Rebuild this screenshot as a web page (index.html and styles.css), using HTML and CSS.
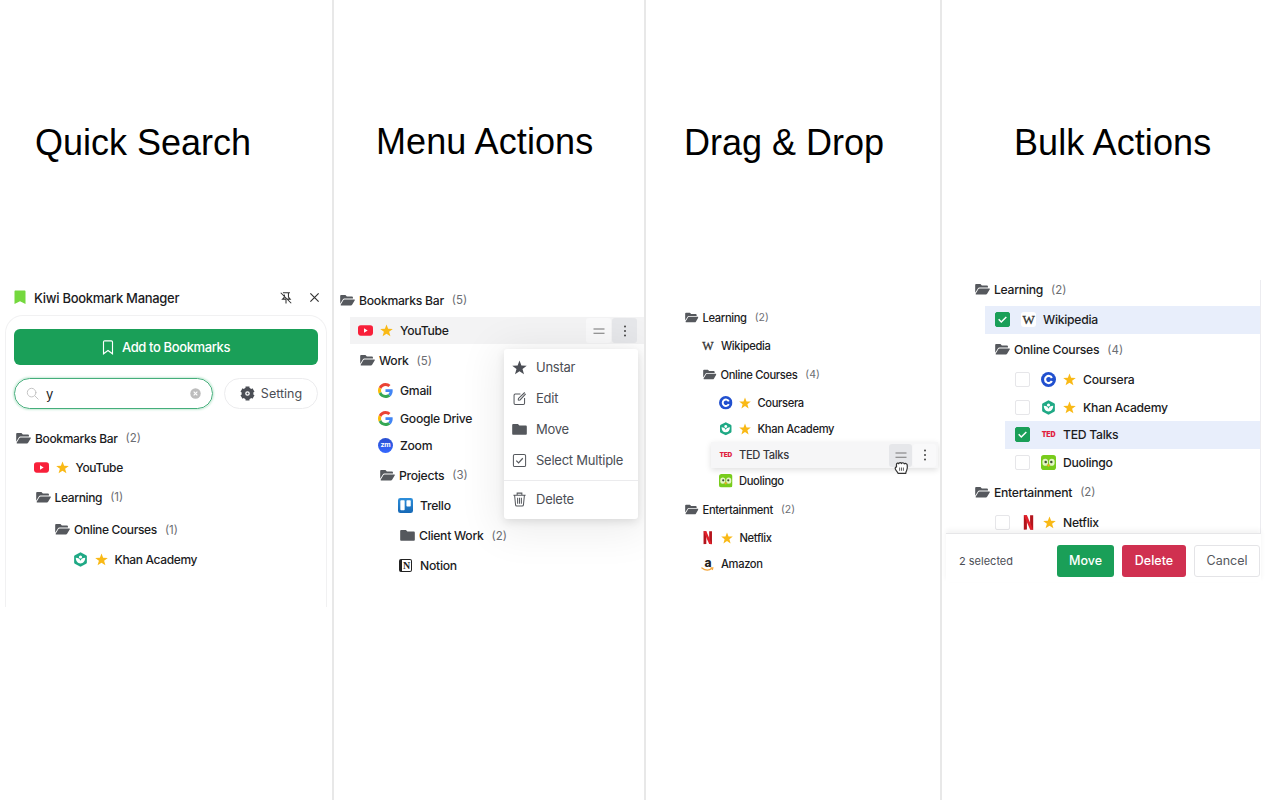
FILE: index.html
```html
<!DOCTYPE html>
<html lang="en">
<head>
    <meta charset="UTF-8">
    <meta name="viewport" content="width=device-width, initial-scale=1.0">
    <title>Kiwi Bookmark Manager</title>
    <link rel="stylesheet" href="styles.css">
</head>
<body>
    <!-- Icon sprite -->
    <svg class="sprite" aria-hidden="true">
        <defs>
            <linearGradient id="grad-trello" x1="0" y1="0" x2="0" y2="1">
                <stop offset="0" stop-color="#2d8fdb"/>
                <stop offset="1" stop-color="#1668b5"/>
            </linearGradient>
        </defs>
        <symbol id="folder-open" viewBox="0 0 16 14">
            <path fill="#55585d" d="M1.2 1h4.6l1.5 1.6h5.500c.6 0 1 .4 1 1v1.200H4.600c-.6 0-1.100.3-1.400.8L.2 10.400V2c0-.6.4-1 1-1z"/>
            <path fill="#55585d" d="M4.800 5.800h10.600c.4 0 .6.4.4.8l-2.900 5c-.3.5-.7.7-1.200.7H1.100c-.4 0-.6-.4-.4-.8l3-5c.2-.5.6-.7 1.100-.7z"/>
        </symbol>
        <symbol id="folder" viewBox="0 0 16 14">
            <path fill="#55585d" d="M1.400 1h4.400c.3 0 .6.1.8.3l1.300 1.300h6.700c.7 0 1.200.5 1.200 1.200v7.700c0 .7-.5 1.200-1.200 1.200H1.400c-.7 0-1.200-.5-1.200-1.200V2.200C.2 1.500.7 1 1.400 1z"/>
        </symbol>
        <symbol id="star" viewBox="0 0 24 24">
            <path d="M12 .8l3 8.100 8.600.3-6.800 5.300 2.400 8.300L12 18l-7.200 4.800 2.400-8.300L.4 9.200 9 8.900z"/>
        </symbol>
        <symbol id="youtube" viewBox="0 0 16 16">
            <rect x="0" y="2.500" width="16" height="11" rx="3" fill="#f8203a"/>
            <path fill="#fff" d="M6.400 5.700v4.600L10.300 8z"/>
        </symbol>
        <symbol id="khan" viewBox="0 0 16 16">
            <path fill="#1fa985" d="M8 .2l6 3.200c.5.300.8.700.8 1.300v6.600c0 .6-.3 1-.8 1.300L8 15.800l-6-3.200c-.5-.3-.8-.7-.8-1.300V4.700c0-.6.3-1 .8-1.300z"/>
            <circle cx="8" cy="5.300" r="1.700" fill="#fff"/>
            <path fill="#fff" d="M3 6.200c2.600 0 4.400 1.300 5 3.200.6-1.900 2.400-3.200 5-3.200 0 3.600-2 6-5 6s-5-2.400-5-6z"/>
        </symbol>
        <symbol id="google" viewBox="0 0 48 48">
            <path fill="#ea4335" d="M24 9.500c3.540 0 6.710 1.220 9.210 3.600l6.850-6.850C35.900 2.380 30.470 0 24 0 14.620 0 6.510 5.380 2.560 13.220l7.980 6.190C12.430 13.720 17.740 9.500 24 9.500z"/>
            <path fill="#4285f4" d="M46.980 24.550c0-1.570-.15-3.090-.38-4.550H24v9.020h12.940c-.58 2.960-2.260 5.480-4.780 7.180l7.730 6c4.510-4.180 7.090-10.360 7.090-17.650z"/>
            <path fill="#fbbc05" d="M10.530 28.590c-.48-1.450-.76-2.990-.76-4.590s.27-3.140.76-4.590l-7.980-6.190C.92 16.460 0 20.120 0 24c0 3.880.92 7.540 2.560 10.780l7.970-6.190z"/>
            <path fill="#34a853" d="M24 48c6.480 0 11.930-2.130 15.890-5.810l-7.730-6c-2.150 1.450-4.920 2.300-8.160 2.300-6.260 0-11.570-4.220-13.470-9.910l-7.980 6.190C6.510 42.620 14.620 48 24 48z"/>
        </symbol>
        <symbol id="trello" viewBox="0 0 16 16">
            <rect width="16" height="16" rx="2.500" fill="url(#grad-trello)"/>
            <rect x="2.500" y="2.500" width="4.600" height="10.500" rx=".8" fill="#fff"/>
            <rect x="9" y="2.500" width="4.600" height="6.500" rx=".8" fill="#fff"/>
        </symbol>
        <symbol id="coursera" viewBox="0 0 16 16">
            <circle cx="8" cy="8" r="8" fill="#2150cf"/>
            <path fill="none" stroke="#fff" stroke-width="2.300" d="M11.600 9.700a3.800 3.800 0 1 1 0-3.400"/>
        </symbol>
        <symbol id="duolingo" viewBox="0 0 16 16">
            <rect width="16" height="16" rx="3" fill="#78cc1c"/>
            <rect x="1.500" y="4" width="6" height="7.500" rx="3" fill="#e3f5c4"/>
            <rect x="8.500" y="4" width="6" height="7.500" rx="3" fill="#e3f5c4"/>
            <circle cx="5" cy="7.500" r="1.300" fill="#3f5232"/>
            <circle cx="11" cy="7.500" r="1.300" fill="#3f5232"/>
            <path fill="#f5a623" d="M6 10h4l-2 2.800z"/>
        </symbol>
        <symbol id="netflix" viewBox="0 0 16 16">
            <path fill="#b4141c" d="M3 .3h3.300v15.200l-3.300.3zM9.700.3H13v15.500l-3.300-.3z"/>
            <path fill="#e3202b" d="M3 .3h3.300l6.700 15.500-3.300-.3z"/>
        </symbol>
        <symbol id="smile" viewBox="0 0 14 4">
            <path fill="none" stroke="#f3a63b" stroke-width="1.400" stroke-linecap="round" d="M1 .8c3.500 2.900 7.800 2.900 11 .5M10.800.8h1.900l-.4 1.700"/>
        </symbol>
        <symbol id="bookmark" viewBox="0 0 12 16">
            <path d="M1.200 2.200c0-.8.500-1.300 1.300-1.300h7c.8 0 1.300.5 1.300 1.300v12.500L6 11.200l-4.800 3.500z"/>
        </symbol>
        <symbol id="brand" viewBox="0 0 12 15">
            <path fill="#74d83e" d="M.5 1.500C.5.900.9.500 1.500.500h9c.6 0 1 .4 1 1V14L6 11.300.5 14z"/>
        </symbol>
        <symbol id="unpin" viewBox="0 0 16 16">
            <path fill="none" stroke="#333" stroke-width="1.200" d="M4.500 2h8M10.800 2v5l2 2.300H9.600M8 9.300v5M6 4v3.200L4 9.300h4M2 2l12 12"/>
        </symbol>
        <symbol id="close" viewBox="0 0 12 12">
            <path fill="none" stroke="#333" stroke-width="1.300" d="M1.500 1.500l9 9M10.500 1.500l-9 9"/>
        </symbol>
        <symbol id="search" viewBox="0 0 16 16">
            <path fill="none" stroke="#c2c2c2" stroke-width="1.200" stroke-linecap="round" d="M11 11l4 4M12.200 6.900a5.300 5.300 0 1 1-10.600 0 5.300 5.300 0 0 1 10.600 0z"/>
        </symbol>
        <symbol id="clear" viewBox="0 0 12 12">
            <circle cx="6" cy="6" r="5.700" fill="#bdbdbd"/>
            <path stroke="#fff" stroke-width="1.200" d="M4 4l4 4M8 4l-4 4"/>
        </symbol>
        <symbol id="gear" viewBox="0 0 16 16">
            <circle cx="8" cy="8" r="4.400" fill="none" stroke="#4b4e55" stroke-width="3.800"/>
            <path stroke="#4b4e55" stroke-width="4.200" d="M8 .6v2.600M8 12.800v2.600M1.600 4.300l2.200 1.300M12.200 10.400l2.200 1.300M1.600 11.700l2.200-1.300M12.200 5.600l2.200-1.300"/>
            <circle cx="8" cy="8" r="1.100" fill="#4b4e55"/>
        </symbol>
        <symbol id="handle" viewBox="0 0 12 12">
            <path stroke="#777" stroke-width="1.100" d="M.5 4h11M.5 8.300h11"/>
        </symbol>
        <symbol id="kebab" viewBox="0 0 12 12">
            <g fill="#444"><circle cx="6" cy="1.400" r="1"/><circle cx="6" cy="6" r="1"/><circle cx="6" cy="10.600" r="1"/></g>
        </symbol>
        <symbol id="edit" viewBox="0 0 16 16">
            <path fill="none" stroke="#55585d" stroke-width="1.100" d="M9 3.100H3.500c-.8 0-1.300.5-1.300 1.300v8.600c0 .8.500 1.300 1.300 1.300h8.600c.8 0 1.300-.5 1.300-1.300V7.500M6.600 9.900l.3-2L13.600 1.600M6.600 9.900l2-.4 6-6.500"/>
        </symbol>
        <symbol id="select" viewBox="0 0 16 16">
            <rect x="1.500" y="1.500" width="13" height="13" rx="1.500" fill="none" stroke="#55585d" stroke-width="1.100"/>
            <path fill="none" stroke="#55585d" stroke-width="1.300" d="M4.600 8.200l2.400 2.400 4.500-5"/>
        </symbol>
        <symbol id="trash" viewBox="0 0 16 16">
            <path fill="none" stroke="#55585d" stroke-width="1.100" d="M1.500 3.500h13M5.500 3.300V1.200h5v2.100M2.800 3.700l1 10.100c.1.800.6 1.200 1.300 1.200h5.800c.7 0 1.200-.4 1.300-1.200l1-10.100M6 6v6.500M8 6v6.500M10 6v6.500"/>
        </symbol>
        <symbol id="check" viewBox="0 0 16 16">
            <path fill="none" stroke="#fff" stroke-width="1.800" d="M3.300 7.800l3.200 3.300 6.200-6.300"/>
        </symbol>
        <symbol id="grab" viewBox="0 0 16 16">
            <path fill="#fff" stroke="#333" stroke-width="1.300" stroke-linejoin="round" d="M4.300 14.200c-.3-1.400-1.500-2.100-2.400-3.500C.9 9.100 1.100 7.500 2.700 7.400l-.1-2.700c0-1.600 1.900-1.900 2.500-.7.300-1.600 2.400-1.600 2.900-.2.500-1.300 2.500-1.100 2.900.4.900-.9 2.900-.5 3.200 1.100.4 2.600.2 4.400-.7 6.200-.4.900-.8 1.600-.8 2.700z"/>
            <path stroke="#555" stroke-width="1" d="M6 8v3.500M8 8v3.500M10 8v3.500"/>
        </symbol>
    </svg>

    <main class="showcase">
        <!-- Quick Search -->
        <section class="column column-search">
            <h2>Quick Search</h2>
            <div class="popup">
                <header class="popup-header">
                    <svg class="brand"><use href="#brand"/></svg>
                    <span class="popup-title">Kiwi Bookmark Manager</span>
                    <svg class="header-icon"><use href="#unpin"/></svg>
                    <svg class="close-icon"><use href="#close"/></svg>
                </header>
                <div class="popup-card">
                    <button class="btn-add">
                        <svg><use href="#bookmark"/></svg>
                        Add to Bookmarks
                    </button>
                    <div class="toolbar">
                        <div class="search-box">
                            <svg class="search-icon"><use href="#search"/></svg>
                            <span class="search-value">y</span>
                            <svg class="clear-icon"><use href="#clear"/></svg>
                        </div>
                        <button class="btn-setting">
                            <svg><use href="#gear"/></svg>
                            Setting
                        </button>
                    </div>
                    <div class="tree">
                        <div class="folder"><svg class="icon"><use href="#folder-open"/></svg>Bookmarks Bar <span class="count">(2)</span></div>
                        <div class="item lv-1"><svg class="icon"><use href="#youtube"/></svg><svg class="star"><use href="#star"/></svg>YouTube</div>
                        <div class="folder lv-1"><svg class="icon"><use href="#folder-open"/></svg>Learning <span class="count">(1)</span></div>
                        <div class="folder lv-2"><svg class="icon"><use href="#folder-open"/></svg>Online Courses <span class="count">(1)</span></div>
                        <div class="item lv-3"><svg class="icon"><use href="#khan"/></svg><svg class="star"><use href="#star"/></svg>Khan Academy</div>
                    </div>
                </div>
            </div>
        </section>

        <!-- Menu Actions -->
        <section class="column column-menu">
            <h2>Menu Actions</h2>
            <div class="tree">
                <div class="folder"><svg class="icon"><use href="#folder-open"/></svg>Bookmarks Bar <span class="count">(5)</span></div>
                <div class="item lv-1 hovered">
                    <svg class="icon"><use href="#youtube"/></svg><svg class="star"><use href="#star"/></svg>YouTube
                    <div class="row-actions">
                        <span class="row-btn"><svg><use href="#handle"/></svg></span>
                        <span class="row-btn active"><svg><use href="#kebab"/></svg></span>
                    </div>
                    <div class="menu">
                        <div class="menu-item"><svg><use href="#star"/></svg>Unstar</div>
                        <div class="menu-item"><svg><use href="#edit"/></svg>Edit</div>
                        <div class="menu-item"><svg><use href="#folder"/></svg>Move</div>
                        <div class="menu-item"><svg><use href="#select"/></svg>Select Multiple</div>
                        <div class="menu-divider"></div>
                        <div class="menu-item"><svg><use href="#trash"/></svg>Delete</div>
                    </div>
                </div>
                <div class="folder lv-1"><svg class="icon"><use href="#folder-open"/></svg>Work <span class="count">(5)</span></div>
                <div class="item lv-2"><svg class="icon"><use href="#google"/></svg>Gmail</div>
                <div class="item lv-2"><svg class="icon"><use href="#google"/></svg>Google Drive</div>
                <div class="item lv-2"><span class="icon logo logo-zoom">zm</span>Zoom</div>
                <div class="folder lv-2"><svg class="icon"><use href="#folder-open"/></svg>Projects <span class="count">(3)</span></div>
                <div class="item lv-3"><svg class="icon"><use href="#trello"/></svg>Trello</div>
                <div class="folder lv-3"><svg class="icon"><use href="#folder"/></svg>Client Work <span class="count">(2)</span></div>
                <div class="item lv-3"><span class="icon logo logo-notion">N</span>Notion</div>
            </div>
        </section>

        <!-- Drag & Drop -->
        <section class="column column-drag">
            <h2>Drag &amp; Drop</h2>
            <div class="tree">
                <div class="folder"><svg class="icon"><use href="#folder-open"/></svg>Learning <span class="count">(2)</span></div>
                <div class="item lv-1"><span class="icon logo logo-wiki">W</span>Wikipedia</div>
                <div class="folder lv-1"><svg class="icon"><use href="#folder-open"/></svg>Online Courses <span class="count">(4)</span></div>
                <div class="item lv-2"><svg class="icon"><use href="#coursera"/></svg><svg class="star"><use href="#star"/></svg>Coursera</div>
                <div class="item lv-2"><svg class="icon"><use href="#khan"/></svg><svg class="star"><use href="#star"/></svg>Khan Academy</div>
                <div class="item lv-2 dragging">
                    <span class="icon logo logo-ted">TED</span>TED Talks
                    <div class="row-actions">
                        <span class="row-btn active"><svg><use href="#handle"/></svg></span>
                        <span class="row-btn"><svg><use href="#kebab"/></svg></span>
                    </div>
                    <svg class="cursor"><use href="#grab"/></svg>
                </div>
                <div class="item lv-2"><svg class="icon"><use href="#duolingo"/></svg>Duolingo</div>
                <div class="folder"><svg class="icon"><use href="#folder-open"/></svg>Entertainment <span class="count">(2)</span></div>
                <div class="item lv-1"><svg class="icon"><use href="#netflix"/></svg><svg class="star"><use href="#star"/></svg>Netflix</div>
                <div class="item lv-1"><span class="icon logo logo-amazon">a<svg><use href="#smile"/></svg></span>Amazon</div>
            </div>
        </section>

        <!-- Bulk Actions -->
        <section class="column column-bulk">
            <h2>Bulk Actions</h2>
            <div class="bulk-panel">
                <div class="tree">
                    <div class="folder"><svg class="icon"><use href="#folder-open"/></svg>Learning <span class="count">(2)</span></div>
                    <div class="item lv-1 selected"><span class="checkbox checked"><svg><use href="#check"/></svg></span><span class="icon logo logo-wiki">W</span>Wikipedia</div>
                    <div class="folder lv-1"><svg class="icon"><use href="#folder-open"/></svg>Online Courses <span class="count">(4)</span></div>
                    <div class="item lv-2"><span class="checkbox"></span><svg class="icon"><use href="#coursera"/></svg><svg class="star"><use href="#star"/></svg>Coursera</div>
                    <div class="item lv-2"><span class="checkbox"></span><svg class="icon"><use href="#khan"/></svg><svg class="star"><use href="#star"/></svg>Khan Academy</div>
                    <div class="item lv-2 selected"><span class="checkbox checked"><svg><use href="#check"/></svg></span><span class="icon logo logo-ted">TED</span>TED Talks</div>
                    <div class="item lv-2"><span class="checkbox"></span><svg class="icon"><use href="#duolingo"/></svg>Duolingo</div>
                    <div class="folder"><svg class="icon"><use href="#folder-open"/></svg>Entertainment <span class="count">(2)</span></div>
                    <div class="item lv-1"><span class="checkbox"></span><svg class="icon"><use href="#netflix"/></svg><svg class="star"><use href="#star"/></svg>Netflix</div>
                </div>
                <footer class="bulk-bar">
                    <span class="bulk-count">2 selected</span>
                    <button class="btn btn-move">Move</button>
                    <button class="btn btn-delete">Delete</button>
                    <button class="btn btn-cancel">Cancel</button>
                </footer>
            </div>
        </section>
    </main>
</body>
</html>
```
FILE: styles.css
```css
:root {
    --green: #1a9f58;
    --red: #d03050;
    --text: #1c1c1e;
    --muted: #6b6d72;
    --divider: #e8e8e8;
}

* {
    box-sizing: border-box;
    margin: 0;
    padding: 0;
}

body {
    font-family: Inter, "Liberation Sans", sans-serif;
    color: var(--text);
    background: #fff;
    overflow: hidden;
}

svg {
    display: block;
    flex-shrink: 0;
}

button {
    font-family: inherit;
    border: none;
    display: flex;
    align-items: center;
    justify-content: center;
}

.sprite {
    position: absolute;
    width: 0;
    height: 0;
}

.showcase {
    display: grid;
    grid-template-columns: 334px 312px 296px 338px;
    height: 800px;
}

.column {
    border-right: 2px solid var(--divider);
    padding-top: 122px;
    min-width: 0;
    overflow: hidden;
}

.column:last-child {
    border-right: none;
}

h2 {
    font-family: "Liberation Sans", Arial, sans-serif;
    font-size: 36px;
    font-weight: 400;
    line-height: 42px;
    color: #000;
    white-space: nowrap;
}

/* Tree */
.tree {
    --indent: 20px;
    --item: 27.3px;
    --folder: 32.9px;
    --icon: 15px;
    font-size: 12.2px;
    font-weight: 500;
    letter-spacing: -.28px;
}

.folder,
.item {
    position: relative;
    display: flex;
    align-items: center;
    white-space: nowrap;
}

.folder {
    height: var(--folder);
    gap: 4px;
    padding-left: calc(var(--lv, 0) * var(--indent));
}

.item {
    height: var(--item);
    gap: 7px;
    margin-left: calc(var(--lv, 0) * var(--indent) - 10px);
    padding-left: 8px;
}

.lv-1 { --lv: 1; }
.lv-2 { --lv: 2; }
.lv-3 { --lv: 3; }

.icon {
    width: var(--icon);
    height: var(--icon);
    flex-shrink: 0;
}

.star {
    width: 13px;
    height: 13px;
    fill: #f9b916;
}

.count {
    margin-left: 4px;
    font-size: 11.5px;
    font-weight: 400;
    letter-spacing: 0;
    color: var(--muted);
}

/* Lettered site logos */
.logo {
    display: flex;
    align-items: center;
    justify-content: center;
    line-height: 1;
}

.logo-zoom {
    border-radius: 50%;
    background: linear-gradient(#2a4fd0, #3568ff);
    color: #fff;
    font-size: 7px;
    font-weight: 700;
    padding-bottom: 1px;
}

.logo-notion {
    height: 13px;
    width: 13px;
    margin: 0 1px;
    border: 1px solid #222;
    border-left-width: 3px;
    border-radius: 2px;
    color: #222;
    font-family: "Liberation Serif", serif;
    font-size: 10px;
    font-weight: 700;
}

.logo-wiki {
    border-radius: 3px;
    background: #fff;
    color: #333;
    font-family: "Liberation Serif", serif;
    font-size: 13px;
    -webkit-text-stroke: .3px #333;
}

.logo-ted {
    color: #e0213f;
    font-size: 7px;
    font-weight: 900;
    letter-spacing: -.2px;
}

.logo-amazon {
    flex-direction: column;
    color: #222;
    font-size: 12px;
    font-weight: 800;
    line-height: 9px;
}

.logo-amazon svg {
    width: 13px;
    height: 4px;
}

.row-actions {
    display: flex;
    gap: 1px;
    margin-left: auto;
}

.row-btn {
    width: 25px;
    height: 25px;
    display: grid;
    place-items: center;
    border-radius: 3px;
    background: #f9f9fa;
}

.row-btn.active {
    background: #e6e7ea;
}

.row-btn svg {
    width: 12px;
    height: 12px;
}

/* Quick search */
.column-search h2 {
    margin-left: 35px;
}

.popup {
    margin: 117px 5px 0;
}

.popup-header {
    display: flex;
    align-items: center;
    height: 34px;
    padding: 0 7px 1px 9px;
    font-size: 13px;
    font-weight: 500;
    letter-spacing: -.3px;
}

.brand {
    width: 12px;
    height: 15px;
    margin-right: 8px;
}

.popup-title {
    flex: 1;
}

.header-icon {
    width: 14px;
    height: 14px;
    margin-right: 16px;
}

.close-icon {
    width: 11px;
    height: 11px;
}

.popup-card {
    height: 292px;
    border: 1px solid #f1f1f2;
    border-bottom: none;
    border-radius: 18px 18px 0 0;
    padding: 13px 8px 0;
}

.btn-add {
    width: 100%;
    height: 36px;
    gap: 8px;
    border-radius: 6px;
    background: var(--green);
    color: #fff;
    font-size: 13px;
    font-weight: 500;
    letter-spacing: -.38px;
}

.btn-add svg {
    width: 12px;
    height: 15px;
    fill: none;
    stroke: #fff;
    stroke-width: 1.2;
}

.toolbar {
    display: flex;
    gap: 11px;
    margin-top: 13px;
}

.search-box {
    display: flex;
    align-items: center;
    width: 199px;
    height: 31px;
    padding: 0 11px;
    border: 1.5px solid #45ae7b;
    border-radius: 16px;
    box-shadow: 0 0 2px 1px #c9ebd8;
    font-size: 13px;
}

.search-icon {
    width: 13px;
    height: 13px;
    margin-right: 7px;
}

.search-value {
    flex: 1;
}

.clear-icon {
    width: 11px;
    height: 11px;
}

.btn-setting {
    flex: 1;
    height: 31px;
    gap: 6px;
    border: 1px solid #ececee;
    border-radius: 16px;
    background: #fff;
    color: #4b4e55;
    font-size: 12.5px;
}

.btn-setting svg {
    width: 15px;
    height: 15px;
}

.column-search .tree {
    --indent: 19.5px;
    --item: 26.7px;
    --folder: 32.5px;
    margin: 13px 0 0 2px;
    font-size: 12px;
    letter-spacing: -.35px;
}

/* Menu actions */
.column-menu h2 {
    margin: -1px 0 0 42px;
    letter-spacing: .1px;
}

.column-menu .tree {
    margin: 121px 0 0 6px;
}

.hovered {
    background: #f3f3f4;
}

.hovered .row-actions {
    padding-right: 6px;
    margin-right: 1px;
}

.menu {
    position: absolute;
    z-index: 2;
    top: 32px;
    right: 6px;
    width: 134px;
    height: 170px;
    padding: 3px 0;
    border-radius: 3px;
    background: #fff;
    box-shadow: 0 3px 8px rgba(0, 0, 0, .1), 0 6px 40px 8px rgba(0, 0, 0, .07);
    color: #4b4e55;
    font-size: 13px;
    font-weight: 400;
    letter-spacing: -.25px;
}

.menu-item {
    display: flex;
    align-items: center;
    gap: 9px;
    height: 31px;
    padding-left: 8px;
}

.menu-item svg {
    width: 15px;
    height: 15px;
    fill: #4b4e55;
}

.menu-divider {
    height: 1px;
    margin: 4px 0 3px;
    background: #ebebed;
}

/* Drag and drop */
.column-drag h2 {
    margin-left: 38px;
}

.column-drag .tree {
    --indent: 18px;
    --item: 26px;
    --folder: 31px;
    --icon: 13.5px;
    margin: 138px 0 0 39px;
    font-size: 11.2px;
    letter-spacing: -.36px;
}

.column-drag .star {
    width: 12px;
    height: 12px;
}

.column-drag .item {
    gap: 6.5px;
}

.column-drag .count {
    font-size: 10.5px;
}

.column-drag .logo-wiki {
    font-size: 12px;
}

.column-drag .logo-ted {
    font-size: 6.5px;
}

.column-drag .dragging {
    background: #f6f6f7;
    box-shadow: 0 2px 6px rgba(0, 0, 0, .13);
    margin-right: 2px;
    color: #38383c;
}

.dragging .row-actions {
    padding-right: 2px;
}

.dragging .row-btn {
    width: 23px;
    height: 23px;
}

.cursor {
    position: absolute;
    z-index: 3;
    top: 18px;
    right: 29px;
    width: 15px;
    height: 15px;
}

/* Bulk actions */
.column-bulk h2 {
    margin-left: 72px;
    letter-spacing: .1px;
}

.bulk-panel {
    width: 315px;
    height: 302px;
    margin: 116px 0 0 4px;
    display: flex;
    flex-direction: column;
}

.column-bulk .tree {
    --item: 27.5px;
    --folder: 32.6px;
    height: 253px;
    padding-left: 29px;
    overflow: hidden;
    border-right: 1px solid #ececf0;
    flex-shrink: 0;
}

.column-bulk .folder:first-child {
    margin-top: -6.5px;
}

.selected {
    background: #e8eefb;
}

.checkbox {
    width: 15px;
    height: 15px;
    margin: 0 4px 0 2px;
    border: 1px solid #e6e6e9;
    border-radius: 2px;
    background: #fff;
}

.checkbox.checked {
    border-color: var(--green);
    background: var(--green);
}

.checkbox svg {
    width: 13px;
    height: 13px;
}

.bulk-bar {
    position: relative;
    display: flex;
    align-items: center;
    gap: 8px;
    height: 49px;
    padding: 5px 1px 0 13px;
    border-top: 1px solid #e6e6e8;
    background: #fff;
    box-shadow: 0 -3px 5px rgba(0, 0, 0, .05);
}

.bulk-count {
    flex: 1;
    font-size: 11px;
    color: #4b4e55;
}

.btn {
    height: 32px;
    border-radius: 3px;
    color: #fff;
    font-size: 12.5px;
}

.btn-move {
    width: 57px;
    background: var(--green);
    font-weight: 500;
}

.btn-delete {
    width: 64px;
    background: var(--red);
    font-weight: 500;
}

.btn-cancel {
    width: 66px;
    border: 1px solid #e4e4e7;
    background: #fff;
    color: #55585d;
}
```
